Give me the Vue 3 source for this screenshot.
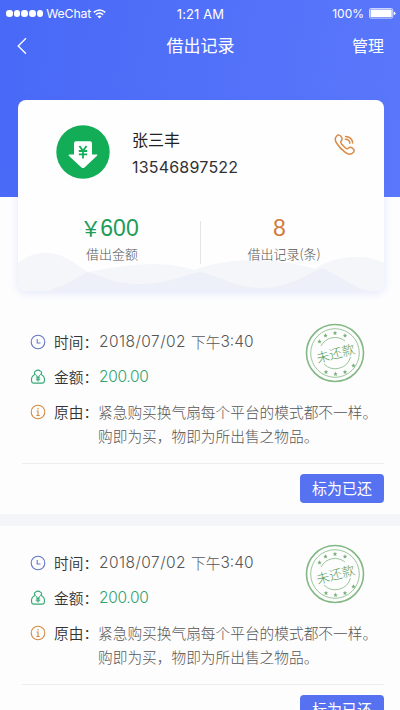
<script setup>
const records = [
  { id: 1, time: '2018/07/02', clock: '下午', hour: '3:40', amount: '200.00', lines: ['紧急购买换气扇每个平台的模式都不一样。', '购即为买，物即为所出售之物品。'] },
  { id: 2, time: '2018/07/02', clock: '下午', hour: '3:40', amount: '200.00', lines: ['紧急购买换气扇每个平台的模式都不一样。', '购即为买，物即为所出售之物品。'] },
]
const stampStars = [[14.5, 18.5], [20.5, 12.5], [30, 10], [40, 12.5], [21, 49], [30.5, 51], [40, 49], [48.5, 42.5]]
</script>

<template>
  <main class="screen">
    <header class="hero">
      <div class="status">
        <div class="carrier">
          <span class="signal"><i v-for="n in 5" :key="n"></i></span>
          <span class="network">WeChat</span>
          <svg class="wifi" width="13" height="10" viewBox="0 0 13 10" fill="none" stroke="#fff" stroke-width="1.5">
            <path d="M.7 3.4Q6.5-1.5 12.3 3.4M2.8 5.7Q6.5 2.6 10.2 5.7" />
            <path d="M4.4 7.4Q6.5 5.7 8.6 7.4L6.5 9.6Z" fill="#fff" stroke="none" />
          </svg>
        </div>
        <span class="now">1:21 AM</span>
        <div class="power">
          <span>100%</span>
          <svg width="27" height="11" viewBox="0 0 27 11" fill="#fff">
            <rect x=".5" y=".5" width="23.2" height="9.6" rx="1.4" fill="none" stroke="#fff" stroke-opacity=".7" />
            <rect x="1.5" y="1.5" width="21.2" height="7.6" rx=".5" />
            <path d="M24.7 3.4Q26.5 4 26.5 5.3T24.7 7.2Z" />
          </svg>
        </div>
      </div>
      <nav class="nav">
        <svg class="back" width="10" height="18" viewBox="0 0 10 18" fill="none" stroke="#fff" stroke-width="1.3"><path d="M9 1.2 1.2 9 9 16.8" /></svg>
        <h1>借出记录</h1>
        <span class="manage">管理</span>
      </nav>
    </header>

    <section class="card">
      <svg class="waves" viewBox="0 0 366 42" preserveAspectRatio="none">
        <path d="M0 14C10 6 18 4 28 4C45 4 56 14 70 23C90 19 115 15 137 15C155 15 165 18 177 21C195 14 215 11 237 11C262 11 285 16 297 20C312 10 325 8 342 8C352 8 360 11 366 14V42H0Z" fill="#f5f6fa" />
        <path d="M34 40C50 36 60 27 70 23C90 30 100 35 122 35C150 35 165 26 182 23C205 28 215 38 242 39C270 39 285 27 304 19C320 26 335 38 350 42H34Z" fill="#edf0f9" />
      </svg>
      <div class="person">
        <svg class="avatar" width="54" height="54" viewBox="0 0 54 54">
          <circle cx="27" cy="27" r="26.7" fill="#13ad58" />
          <path d="M20 16.3H34Q36 16.3 36 18.3V29.4H40.7Q42 29.5 41 30.7L28.5 42.4Q27 43.6 25.5 42.4L12.8 30.7Q12 29.5 13.3 29.4H18V18.3Q18 16.3 20 16.3Z" fill="#fff" />
          <path d="M23.4 21 27 25.7 30.6 21M22.8 26H31.2M22.8 29.4H31.2M27 25.7V33.5" fill="none" stroke="#13ad58" stroke-width="1.8" />
        </svg>
        <div class="identity">
          <strong>张三丰</strong>
          <span>13546897522</span>
        </div>
        <svg class="phone" width="22" height="22" viewBox="0 0 22 22" fill="none" stroke="#d88c48" stroke-width="1.5" stroke-linecap="round" stroke-linejoin="round">
          <path d="M2.5 2.3C4.2.5 5.9.9 7 2.5C8.3 4.2 8.8 5.2 7.3 6.7C6.2 7.9 6.5 8.5 7.5 9.9L11.5 14C12.8 15.1 13.5 15 14.6 14C16 12.7 17 13.1 18.7 14.4C20.3 15.7 20.8 17 19 18.8C17.2 20.6 14.5 20.7 11.3 18.3C7.8 15.8 4.6 12.4 2.5 9C.7 6.1.9 3.9 2.5 2.3Z" />
          <path d="M11.5 2.4C15.2 2.3 18.4 5 18.7 9M11.4 5.3C13.7 5.2 15.6 6.8 15.8 9.2" />
        </svg>
      </div>
      <div class="totals">
        <div class="total lent"><b><span class="yen">￥</span>600</b><span class="caption">借出金额</span></div>
        <i class="separator"></i>
        <div class="total count"><b>8</b><span class="caption">借出记录(条)</span></div>
      </div>
    </section>

    <div class="list">
      <article v-for="record in records" :key="record.id" class="record">
        <div class="details">
          <div class="row">
            <svg width="16" height="16" viewBox="0 0 16 16" fill="none" stroke="#6476c5" stroke-width="1.1"><circle cx="8" cy="8" r="6.8" /><path d="M7.2 5V9H10.5" /></svg>
            <span class="label">时间：</span>
            <span class="value time"><span class="num">{{ record.time }}</span><span>{{ record.clock }}</span><span class="num">{{ record.hour }}</span></span>
          </div>
          <div class="row">
            <svg width="16" height="16" viewBox="0 0 16 16" fill="none" stroke="#36a875" stroke-width="1.1" stroke-linejoin="round"><path d="M5.4 5.2C3.8 4.3 3.9 2.6 5.6 2.2C6.8.8 9.2.8 10.4 2.2C12.1 2.6 12.2 4.3 10.6 5.2C13.5 6.3 14.8 9.2 14.4 12C14.3 13.5 13.6 14.1 12.2 14.1H3.8C2.4 14.1 1.7 13.5 1.6 12C1.2 9.2 2.5 6.3 5.4 5.2Z" /><path d="m6.1 6.2 1.9 2.6 1.9-2.6M5.8 9H10.2M5.8 10.8H10.2M8 8.8V12.6" /></svg>
            <span class="label">金额：</span>
            <span class="value num money">{{ record.amount }}</span>
          </div>
          <div class="row reason">
            <svg width="16" height="16" viewBox="0 0 16 16" fill="none" stroke="#d58945" stroke-width="1.1"><circle cx="8" cy="8" r="6.8" /><path d="M8 4V5.5M6.7 7H8V11.5M6.4 11.5H9.7" /></svg>
            <span class="label">原由：</span>
            <span class="value"><span v-for="line in record.lines" :key="line" class="line">{{ line }}</span></span>
          </div>
          <svg class="stamp" width="60" height="60" viewBox="0 0 60 60">
            <g fill="none" stroke="#83b783">
              <circle cx="30" cy="30" r="28.5" stroke-width="1.6" />
              <circle cx="30" cy="30" r="24.3" stroke-width=".8" />
              <path d="M16 23A15.8 15.8 0 0 1 40 18M45.5 34A15.8 15.8 0 0 1 19 41" stroke-width=".8" />
            </g>
            <path v-for="(star, i) in stampStars" :key="i" :transform="`translate(${star[0]} ${star[1]})`" d="M0-2.2.7-.7 2.2-.6 1 .5 1.4 2 0 1.3-1.4 2-1 .5-2.2-.6-.7-.7Z" fill="#7ab17a" />
            <text x="30.5" y="35.5" text-anchor="middle" transform="rotate(-15 30 30)">未还款</text>
          </svg>
        </div>
        <footer><button>标为已还</button></footer>
      </article>
    </div>
  </main>
</template>

<style>
body { overflow: hidden; }
</style>

<style scoped>
* { box-sizing: border-box; }
.screen { height: 710px; overflow: hidden; background: #fdfdfe; font-family: "Noto Sans CJK SC", sans-serif; color: #333; }
.hero { height: 197px; background: linear-gradient(100deg, #4869f7, #5b78fb); color: #fff; }
.status { height: 26px; padding: 1px 5px 0 6px; display: grid; grid-template-columns: 1fr auto 1fr; align-items: center; font: 12.5px/24px Inter, sans-serif; }
.carrier, .signal, .power { display: flex; align-items: center; }
.signal { gap: 1.2px; }
.signal i { flex: none; width: 6.5px; height: 6.5px; border-radius: 50%; background: #fff; }
.network { margin-left: 3px; font-size: 12.3px; letter-spacing: -.15px; }
.wifi { margin-left: 2px; }
.now { font-size: 13px; letter-spacing: .1px; }
.power { justify-content: flex-end; gap: 5px; font-size: 12px; }
.power svg { margin-right: -1px; }
.nav { height: 40px; padding: 0 16px 0 17px; display: grid; grid-template-columns: 1fr auto 1fr; align-items: center; }
.nav h1 { margin: 0; font-size: 17px; font-weight: 400; line-height: 38px; padding-bottom: 2px; }
.manage { justify-self: end; font-size: 16px; line-height: 38px; padding-bottom: 2px; }
.card { position: relative; z-index: 0; width: 366px; height: 191px; margin: -97px 0 0 18px; background: #fefefe; border-radius: 8px; box-shadow: 0 2px 8px rgba(77, 105, 235, .15); }
.waves { position: absolute; z-index: -1; bottom: 0; left: 0; width: 366px; height: 42px; border-radius: 0 0 8px 8px; }
.person { height: 104px; padding: 0 28px 0 38px; display: flex; align-items: center; }
.identity { margin-left: 22px; padding-top: 2px; display: flex; flex-direction: column; gap: 3px; }
.identity strong { font-size: 16px; font-weight: 400; line-height: 25px; color: #202124; }
.identity span { font: 16px/25px Inter, sans-serif; letter-spacing: .2px; color: #303135; }
.phone { margin: -15px 0 0 auto; }
.totals { padding-top: 11px; display: grid; grid-template-columns: 182px 1px 166px; align-items: start; }
.total { display: flex; flex-direction: column; align-items: center; }
.total b { height: 26px; font: 400 23px/26px "Liberation Sans", sans-serif; white-space: nowrap; }
.lent { padding-left: 6px; }
.lent b { color: #219b59; }
.yen { font: 21px/20px "Noto Sans CJK SC", sans-serif; margin: 0 -1px 0 -5px; }
.count b { margin-right: 9px; color: #cf7c3d; }
.caption { margin-top: 3px; font-size: 13px; font-weight: 300; line-height: 20px; color: #555; }
.separator { width: 1px; height: 43px; margin-top: 6px; background: #e5e5e8; }
.list { padding-top: 12px; display: grid; gap: 12px; background: linear-gradient(#fdfdfe 24px, #f4f5f8 24px); }
.record { height: 211px; padding: 24px 16px 0 22px; background: #fdfdfe; overflow: hidden; }
.record + .record { height: 214px; padding-top: 22px; }
.details { position: relative; height: 136px; padding-left: 8px; }
.row { height: 35px; display: flex; align-items: flex-start; line-height: 30px; font-size: 14.7px; white-space: nowrap; }
.row > svg { flex: none; margin-top: 7px; }
.label { width: 45px; margin-left: 8px; font-weight: 350; color: #333; }
.value { color: #565656; font-weight: 300; }
.time { display: flex; }
.time .num:first-child { margin-right: 5px; }
.num { font-family: Inter, sans-serif; font-size: 15.5px; letter-spacing: .45px; }
.time .num:last-child { letter-spacing: 0; }
.num.money { color: #32a36d; letter-spacing: -.3px; }
.reason .value { padding-top: 3px; }
.line { display: block; line-height: 24px; margin-left: -1px; }
.stamp { position: absolute; top: -4px; left: 283px; }
.stamp text { font: 300 13px "Noto Sans CJK SC", sans-serif; fill: #589c58; }
.record footer { height: 51px; border-top: 1px solid #eeecef; padding-top: 10px; display: flex; justify-content: flex-end; }
button { width: 84px; height: 29px; border: 0; padding: 0 0 2px; border-radius: 4px; background: #5772f1; color: #fff; font: 15px/27px "Noto Sans CJK SC", sans-serif; }
</style>
